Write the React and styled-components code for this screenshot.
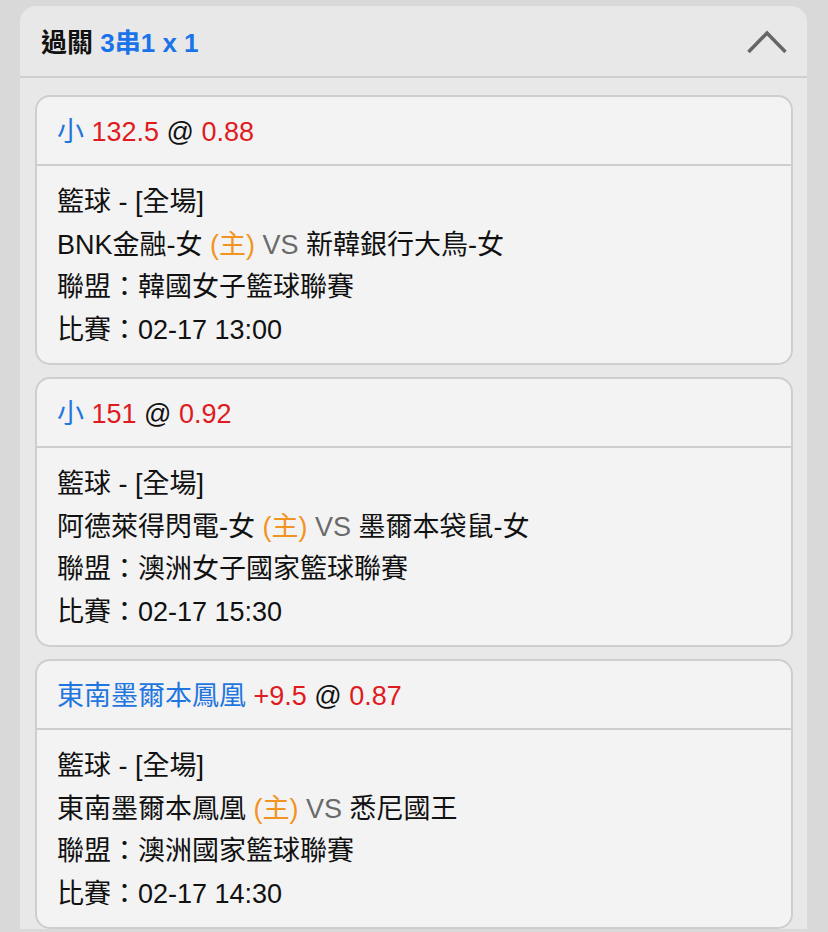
import React from 'react';
import styled, { createGlobalStyle } from 'styled-components';

const GlobalStyle = createGlobalStyle`
  html, body {
    margin: 0;
    padding: 0;
    background: #d9d9d9;
  }
  body {
    font-family: "Liberation Sans", "Noto Sans CJK TC", sans-serif;
    color: #111;
  }
`;

const Page = styled.div`
  padding: 6px 21px 0 20px;
  min-height: 932px;
  box-sizing: border-box;
`;

const Panel = styled.div`
  background: #e8e8e8;
  border-radius: 16px 16px 0 0;
  overflow: hidden;
`;

const PanelHeader = styled.div`
  height: 70px;
  display: flex;
  align-items: center;
  justify-content: space-between;
  padding: 0 20px 0 21px;
  border-bottom: 2px solid #cfcfcf;
`;

const Title = styled.div`
  font-size: 26px;
  font-weight: 700;
  color: #111;
  margin-top: -2px;

  span {
    color: #1a73e8;
  }
`;

const Chevron = styled.svg`
  width: 40px;
  height: 24px;
  margin-top: 1px;
`;

const CardList = styled.div`
  display: flex;
  flex-direction: column;
  gap: 12px;
  padding: 17px 14px 0 15px;
`;

const Card = styled.div`
  background: #f3f3f3;
  border: 2px solid #cecece;
  border-radius: 15px;
`;

const CardHeader = styled.div`
  height: 67px;
  line-height: 70px;
  padding: 0 20px;
  font-size: 27px;
  border-bottom: 2px solid #cecece;
  white-space: nowrap;
`;

const Pick = styled.span`
  color: ${p => (p.tone === 'blue' ? '#1f76df' : p.tone === 'red' ? '#df1b1f' : '#111')};
`;

const CardBody = styled.div`
  padding: 15px 20px 12px;
  font-size: 27px;
  line-height: 42.5px;
  color: #111;
`;

const Line = styled.div`
  white-space: nowrap;
`;

const Home = styled.span`
  color: #f29322;
`;

const Vs = styled.span`
  color: #6a6a6a;
`;

const bets = [
  {
    pick: '小',
    line: '132.5',
    odds: '0.88',
    home: 'BNK金融-女',
    away: '新韓銀行大鳥-女',
    league: '韓國女子籃球聯賽',
    time: '02-17 13:00',
  },
  {
    pick: '小',
    line: '151',
    odds: '0.92',
    home: '阿德萊得閃電-女',
    away: '墨爾本袋鼠-女',
    league: '澳洲女子國家籃球聯賽',
    time: '02-17 15:30',
  },
  {
    pick: '東南墨爾本鳳凰',
    line: '+9.5',
    odds: '0.87',
    home: '東南墨爾本鳳凰',
    away: '悉尼國王',
    league: '澳洲國家籃球聯賽',
    time: '02-17 14:30',
  },
];

function BetCard({ bet }) {
  return (
    <Card>
      <CardHeader>
        <Pick tone="blue">{bet.pick}</Pick>{' '}
        <Pick tone="red">{bet.line}</Pick>{' @ '}
        <Pick tone="red">{bet.odds}</Pick>
      </CardHeader>
      <CardBody>
        <Line>籃球 - [全場]</Line>
        <Line>
          {bet.home} <Home>(主)</Home> <Vs>VS</Vs> {bet.away}
        </Line>
        <Line>聯盟：{bet.league}</Line>
        <Line>比賽：{bet.time}</Line>
      </CardBody>
    </Card>
  );
}

export default function App() {
  return (
    <>
      <GlobalStyle />
      <Page>
        <Panel>
          <PanelHeader>
            <Title>
              過關 <span>3串1 x 1</span>
            </Title>
            <Chevron viewBox="0 0 40 24">
              <polyline points="1.5,22 20,3 38.5,22" fill="none" stroke="#666" strokeWidth="3.5" />
            </Chevron>
          </PanelHeader>
          <CardList>
            {bets.map((bet, i) => (
              <BetCard key={i} bet={bet} />
            ))}
          </CardList>
        </Panel>
      </Page>
    </>
  );
}
